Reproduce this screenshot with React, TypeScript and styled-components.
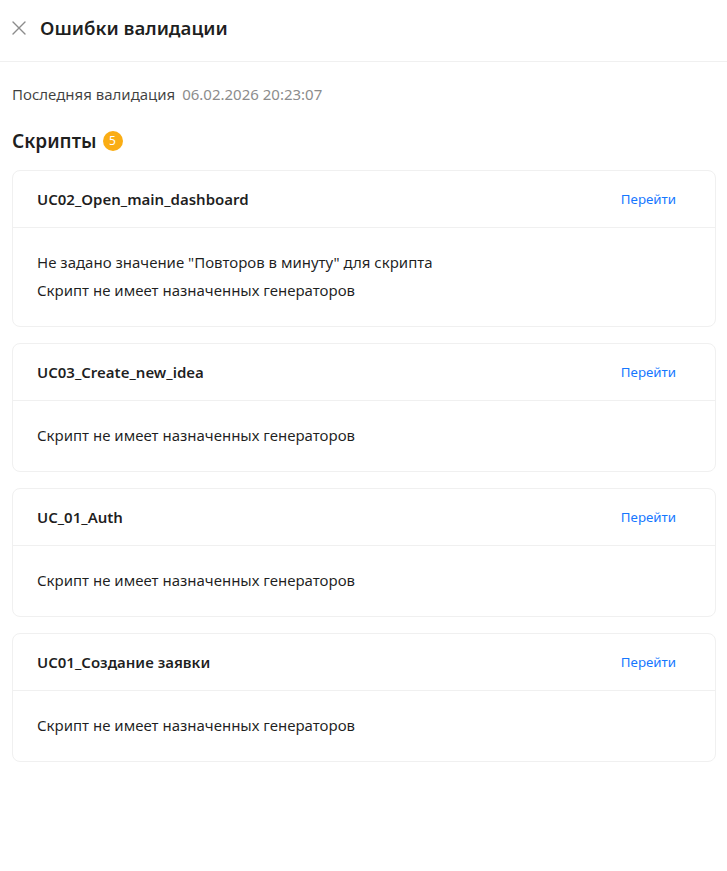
import React from 'react'
import styled, { createGlobalStyle } from 'styled-components'

const GlobalStyle = createGlobalStyle`
	body {
		margin: 0;
		background: #ffffff;
		font-family: 'Noto Sans', 'Liberation Sans', sans-serif;
		color: rgba(0, 0, 0, 0.88);
	}
`

const scripts = [
	{ name: 'UC02_Open_main_dashboard', errors: ['Не задано значение "Повторов в минуту" для скрипта', 'Скрипт не имеет назначенных генераторов'] },
	{ name: 'UC03_Create_new_idea', errors: ['Скрипт не имеет назначенных генераторов'] },
	{ name: 'UC_01_Auth', errors: ['Скрипт не имеет назначенных генераторов'] },
	{ name: 'UC01_Создание заявки', errors: ['Скрипт не имеет назначенных генераторов'] },
]

const CloseIcon = () => (
	<svg width="14" height="14" viewBox="0 0 14 14" fill="none">
		<path d="M1 1L13 13M13 1L1 13" stroke="#8c8c8c" strokeWidth="1.4" strokeLinecap="round" />
	</svg>
)

const App = () => {
	return (
		<>
			<GlobalStyle />
			<Drawer>
				<Header>
					<CloseButton>
						<CloseIcon />
					</CloseButton>
					<Title>Ошибки валидации</Title>
				</Header>
				<Body>
					<Meta>
						Последняя валидация <MetaDate>06.02.2026 20:23:07</MetaDate>
					</Meta>
					<SectionTitle>
						Скрипты <Badge>5</Badge>
					</SectionTitle>
					<CardList>
						{scripts.map((item, index) => (
							<Card key={index}>
								<CardHead>
									<CardTitle>{item.name}</CardTitle>
									<LinkButton>Перейти</LinkButton>
								</CardHead>
								<CardBody>
									{item.errors.map((err, i) => (
										<ErrorLine key={i}>{err}</ErrorLine>
									))}
								</CardBody>
							</Card>
						))}
					</CardList>
				</Body>
			</Drawer>
		</>
	)
}

const Drawer = styled.div`
	width: 727px;
	min-height: 871px;
	background: #fff;
`
const Header = styled.div`
	display: flex;
	align-items: center;
	height: 62px;
	padding: 0 12px;
	border-bottom: 1px solid #f0f0f0;
	box-sizing: border-box;
`
const CloseButton = styled.span`
	display: flex;
	align-items: center;
	justify-content: center;
	width: 14px;
	height: 14px;
	margin-right: 14px;
	margin-top: -6px;
	cursor: pointer;
`
const Title = styled.div`
	font-size: 18.7px;
	font-weight: 600;
	line-height: 24px;
	margin-top: -5px;
`
const Body = styled.div`
	padding: 21px 11px 0 12px;
`
const Meta = styled.div`
	font-size: 15px;
	line-height: 22px;
	color: rgba(0, 0, 0, 0.75);
`
const MetaDate = styled.span`
	color: #8c8c8c;
	margin-left: 3px;
`
const SectionTitle = styled.div`
	display: flex;
	align-items: center;
	gap: 6px;
	margin-top: 23px;
	font-size: 19px;
	font-weight: 600;
	line-height: 26px;
`
const Badge = styled.span`
	display: inline-flex;
	align-items: center;
	justify-content: center;
	width: 20px;
	height: 20px;
	border-radius: 50%;
	background: #faad14;
	color: #fff;
	font-size: 12px;
	font-weight: 400;
`
const CardList = styled.div`
	display: flex;
	flex-direction: column;
	gap: 16px;
	margin-top: 16px;
`
const Card = styled.div`
	border: 1px solid #f0f0f0;
	border-radius: 8px;
	background: #fff;
`
const CardHead = styled.div`
	display: flex;
	align-items: center;
	justify-content: space-between;
	min-height: 56px;
	padding: 0 24px;
	border-bottom: 1px solid #f0f0f0;
`
const CardTitle = styled.div`
	font-size: 15px;
	font-weight: 600;
`
const LinkButton = styled.span`
	padding: 0 15px;
	font-size: 13.3px;
	color: #1677ff;
	cursor: pointer;
`
const CardBody = styled.div`
	display: flex;
	flex-direction: column;
	gap: 6px;
	padding: 23px 24px 25px;
`
const ErrorLine = styled.div`
	font-size: 15px;
	line-height: 22px;
`

export default App
